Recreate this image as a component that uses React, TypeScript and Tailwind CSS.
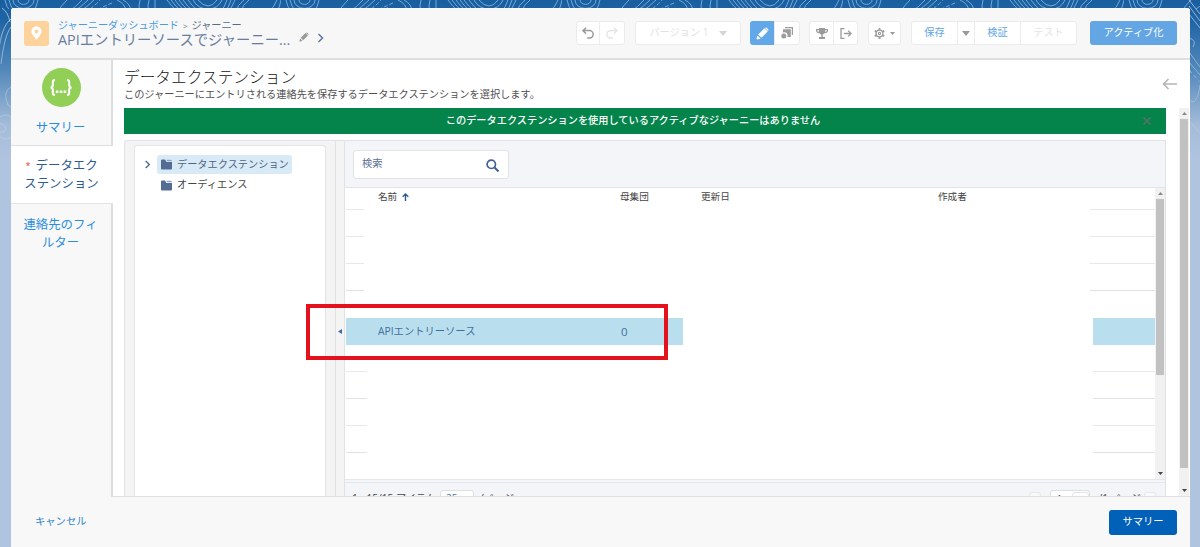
import { ReactNode } from "react";
import clsx from "clsx";

const rows = [
  { line: "#e6e8ec", short: true },
  { line: "#e6e8ec", short: true },
  { line: "#dfe1e6", short: true },
  { line: "transparent", short: true },
  { line: "transparent", name: "APIエントリーソース", count: "0" },
  { line: "#e6e9ef" },
  { line: "#e0e2e7" },
  { line: "#e6e8ec" },
  { line: "#e0e2e7" }
];

const Contours = () => (
  <svg className="absolute inset-0" width="1200" height="547" fill="none">
    <defs>
      <pattern id="topo" width="281" height="12" patternUnits="userSpaceOnUse">
        <g stroke="#7fb0dc" strokeWidth="0.9" fill="none">
          <path d="M18 0a5 4 0 0 0 11 0M13 0a10 8 0 0 0 21 0M5 0q1 7 6 12M9 0q1 6 6 12M38 0q-1 6-5 12" />
          <path d="M57 12Q62 5 67 0M68 12Q76 7 82 0M73 12Q81 7 88 0M79 12Q87 7 94 0" />
          <path d="M85 12Q94 7 100 0M92 12l22-10M98 12l10-5" strokeDasharray="4 2" />
          <path d="M117 0q9 4 9 12M123 0q8 4 8 12M140 0q-2 6 0 12M149 0q-2 6 0 12M155 0v12" />
          <path d="M167 0q4 6 11 12M171 0q4 6 11 12M175 0q4 6 11 12M179 0q4 6 11 12M183 0q4 6 11 12M188 0q4 6 11 12M193 0q5 9 15 9t14-9M198 0q5 6 10 6t9-6" />
          <path d="M227 0q-2 8-8 12M231 0q-2 8-7 12M235 0l-6 12M244 0q-7 5-8 12M249 0q-7 5-8 12" />
          <path d="M277 0q-3 8-9 12M281 0q-1 6-4 12" />
        </g>
      </pattern>
      <linearGradient id="fade" x2="0" y2="1">
        <stop offset="0" stopColor="#fff" stopOpacity=".55" />
        <stop offset="1" stopColor="#fff" stopOpacity=".15" />
      </linearGradient>
    </defs>
    <rect width="1200" height="9" fill="url(#topo)" />
    <g stroke="url(#fade)" strokeWidth="1">
      <path d="M2 8q6 4 8 14M11 19C4 24 0 38-1 50M11 27C6 33 3 48 1 64M11 87Q2 92 8 105l4 3M0 117q6-4 11 0M0 137q6 4 11 0M0 123q9 4 4 9H0" />
      <path d="M4 52v40" strokeDasharray="4 3" />
      <path d="M1189 0l11 14M1189 6l11 15M1189 14l11 14M1189 38q8 2 4 9M1189 52l11 15M1189 62l11 13M1189 100q8 7 11-15M1190 122l10 11" />
      <path d="M1189 70l11 12" strokeDasharray="4 3" />
    </g>
  </svg>
);

const Group = ({ className, children }: { className?: string; children: ReactNode }) => (
  <div
    className={clsx(
      "flex h-6 items-stretch divide-x divide-[#ececec] rounded-[3px] border border-[#ebebeb] bg-white",
      className
    )}
  >
    {children}
  </div>
);

const Cell = ({ className, children }: { className?: string; children?: ReactNode }) => (
  <div className={clsx("flex items-center justify-center", className)}>{children}</div>
);

const Caret = ({ className, up }: { className?: string; up?: boolean }) => (
  <svg className={className} viewBox="0 0 10 6" fill="currentColor">
    <path d={up ? "M0 6h10L5 0z" : "M0 0h10L5 6z"} />
  </svg>
);

const Pencil = ({ className }: { className?: string }) => (
  <svg className={className} viewBox="0 0 24 24" fill="currentColor">
    <path d="M1.500 22.500q-.8-.3-.5-1.200L2.700 15.500 8.500 21.300 2.700 23zM4 14L15.500 2.500 21.500 8.500 10 20zM17 1.600q1.500-1.400 3 0L22.400 4q1.400 1.500 0 3l-.3.200-5.400-5.300z" />
  </svg>
);

const Chevron = ({ className }: { className?: string }) => (
  <svg className={className} viewBox="0 0 6 10" fill="none" stroke="currentColor" strokeWidth="1.5">
    <path d="M1 1l4 4-4 4" />
  </svg>
);

const Folder = () => (
  <svg className="h-[11px] w-[11px] shrink-0" viewBox="0 0 11 11" fill="#536c94">
    <path d="M0 1.500Q0 .5 1 .5h3L5.500 3H11v6.500q0 1-1 1H1q-1 0-1-1z" />
    <path d="M5.300.8H10q.8 0 .8.900v.6H6.300z" fill="#8fa4c2" />
  </svg>
);

const Header = () => (
  <header className="flex h-[52px] shrink-0 items-center rounded-t-[3px] border-b-2 border-[#dedfe1] bg-[#f7f7f7] pl-[13px] pr-[13px]">
    <div className="flex h-[25px] w-[25px] items-center justify-center rounded-[3px] bg-[#fdd29b]">
      <svg className="h-[14px] w-[11px]" viewBox="0 0 12 15">
        <path fill="#fff" fillRule="evenodd" d="M6 0a5.600 5.600 0 0 1 5.600 5.600C11.600 9 8 12 6 15 4 12 .4 9 .4 5.600A5.600 5.600 0 0 1 6 0zm0 3.600a2.200 2.200 0 1 0 0 4.400 2.200 2.200 0 0 0 0-4.400z" />
      </svg>
    </div>
    <div className="ml-[9px] w-[235px] whitespace-nowrap">
      <div className="mt-px text-[10.15px] leading-[13px] text-[#596b85]">
        <span className="text-[#4b9be0]">ジャーニーダッシュボード</span>
        <span className="mx-1 text-[8px]">&gt;</span>
        ジャーニー
      </div>
      <div className="text-[14.35px] leading-[16px] text-[#687e9e]">APIエントリーソースでジャーニー...</div>
    </div>
    <Pencil className="ml-[6px] mt-[7px] h-[10px] w-[10px] text-[#999]" />
    <Chevron className="ml-2 mt-[9px] h-[10px] w-[7px] text-[#5d76a0]" />

    <div className="ml-auto flex items-center text-[10.2px] text-[#61a5e4]">
      <Group>
        <Cell className="w-[23px]">
          <svg className="h-3 w-3 text-[#9b9b9b]" viewBox="0 0 12 12" fill="none" stroke="currentColor" strokeWidth="1.500">
            <path d="M4 .8L1 3.600l3 3M1 3.600h6.500a3.700 3.700 0 0 1 0 7.400H5.200" />
          </svg>
        </Cell>
        <Cell className="w-6">
          <svg className="h-3 w-3 text-[#e3e3e3]" viewBox="0 0 12 12" fill="none" stroke="currentColor" strokeWidth="1.300">
            <path d="M8 .8l3 2.800-3 3M11 3.600H4.500a3.700 3.700 0 0 0 0 7.400h2.300" />
          </svg>
        </Cell>
      </Group>
      <Group className="ml-[10px]">
        <Cell className="w-[104px] gap-[10px] text-[#e2e2e2]">
          バージョン 1
          <Caret className="h-[5px] w-2 text-[#d5d5d5]" />
        </Cell>
      </Group>
      <Group className="ml-[9px]">
        <Cell className="-my-px -ml-px w-[25px] rounded-l-[3px] bg-[#62a7e7] text-white">
          <Pencil className="h-[13px] w-[13px]" />
        </Cell>
        <Cell className="w-6">
          <svg className="h-3 w-3" viewBox="0 0 12 12" fill="#9c9c9c">
            <path d="M4 0h8v8h-1.200V1.300H4zM2 2.200h7.800V10H6.300A3.200 3.200 0 0 0 2 5.600z" />
            <circle cx="2.800" cy="9" r="2.500" />
          </svg>
        </Cell>
      </Group>
      <Group className="ml-[9px]">
        <Cell className="w-6">
          <svg className="h-[11px] w-3" viewBox="0 0 12 11">
            <path fill="#9a9a9a" d="M3 0h6v1h3v1.500Q12 5 8.500 5.200 8 6.300 6.700 6.500V9H9v2H3V9h2.300V6.500Q4 6.300 3.500 5.200 0 5 0 2.500V1h3z" />
            <path d="M1 2q0 1.800 2 2.100V2zM11 2q0 1.800-2 2.100V2z" fill="#e4e4e4" />
          </svg>
        </Cell>
        <Cell className="w-[23px]">
          <svg className="h-[11px] w-3" viewBox="0 0 12 11" fill="none" stroke="#9a9a9a" strokeWidth="1.300">
            <path d="M4.500.7H1v9.600h3.500M4 5.500h7M8.200 2.600l2.900 2.900-2.900 2.900" />
          </svg>
        </Cell>
      </Group>
      <Group className="ml-[10px]">
        <Cell className="w-[31px] gap-[5px] text-[#9a9a9a]">
          <svg className="h-[11px] w-[11px]" viewBox="0 0 12 12" fill="none" stroke="currentColor">
            <circle cx="6" cy="6" r="3.700" strokeWidth="1.500" />
            <circle cx="6" cy="6" r="1.200" strokeWidth="1.200" />
            <path strokeWidth="2" d="M6 0v2M6 10v2M.8 3l1.700 1M9.500 8l1.700 1M.8 9l1.700-1M9.500 4l1.700-1" />
          </svg>
          <Caret className="h-[3px] w-[5px]" />
        </Cell>
      </Group>
      <Group className="ml-[10px]">
        <Cell className="w-[46px]">保存</Cell>
        <Cell className="w-[17px]">
          <Caret className="h-[5px] w-2 text-[#999]" />
        </Cell>
        <Cell className="w-[46px]">検証</Cell>
        <Cell className="w-[55px] text-[#e4e4e4]">テスト</Cell>
      </Group>
      <button className="ml-[13px] h-6 w-[87px] rounded-[3px] bg-[#64a6e4] text-[10.2px] text-white">アクティブ化</button>
    </div>
  </header>
);

const Sidebar = () => (
  <nav className="flex w-[102px] shrink-0 flex-col bg-[#f8f8f9] text-center text-[12.4px] leading-[18px] text-[#2b8de0]">
    <div className="flex h-[86px] flex-col items-center border-b border-r-2 border-[#dddee0] pt-2">
      <div className="flex h-[39px] w-[39px] items-center justify-center rounded-full bg-[#91cf56]">
        <svg className="h-[17px] w-[22px]" viewBox="0 0 22 17" fill="none" stroke="#fff" strokeWidth="2">
          <path d="M5 1Q2.800 1 2.800 3v3Q2.800 8.500.5 8.500 2.800 8.500 2.800 11v3q0 2 2.200 2M17 1q2.200 0 2.200 2v3q0 2.500 2.300 2.500-2.300 0-2.300 2.500v3q0 2-2.200 2" />
          <path d="M5.800 12.800h2.600M9.700 12.800h2.600M13.600 12.800h2.600" strokeWidth="2.500" />
        </svg>
      </div>
      <div className="mt-[12px] pr-px">サマリー</div>
    </div>
    <div className="h-[58px] border-b border-[#e3e4e6] bg-white pr-px pt-[11px] text-[#2c5c8f]">
      <span className="mr-[2px] align-[1px] text-[9px] leading-none text-[#d9462f]">*</span> データエク
      <br />
      ステンション
    </div>
    <div className="flex-1 border-r-2 border-[#dcdde0] pr-px pt-[12px]">
      連絡先のフィ
      <br />
      ルター
    </div>
  </nav>
);

const Tree = () => (
  <div className="flex w-[211px] shrink-0 rounded-tl-[3px] border-l border-t border-[#e3e4e6] bg-[#f4f4f4] pl-[9px] pt-1">
    <div className="w-[192px] rounded-t-[3px] border border-b-0 border-[#e3e4e6] bg-white pt-[9px] text-[10.2px] text-[#444]">
      <div className="flex items-center">
        <Chevron className="ml-[9px] h-[9px] w-[7px] text-[#4a6794]" />
        <div className="ml-[6px] flex h-[19px] w-[135px] items-center gap-[5px] whitespace-nowrap rounded-[3px] bg-[#d9eaf7] pl-1 text-[#4f6580]">
          <Folder />
          データエクステンション
        </div>
      </div>
      <div className="ml-[26px] mt-px flex h-5 items-center gap-[5px]">
        <Folder />
        オーディエンス
      </div>
    </div>
  </div>
);

const Scrollbar = ({ className, thumb }: { className?: string; thumb: string }) => (
  <div className={clsx("flex shrink-0 flex-col items-center bg-[#f1f1f1]", className)}>
    <Caret up className="mb-[4px] mt-[4px] h-[3px] w-[5px] shrink-0 text-[#8a8a8a]" />
    <div className={clsx("w-2 shrink-0 bg-[#c1c1c1]", thumb)} />
    <Caret className="mb-1 mt-auto h-[3px] w-[5px] shrink-0 text-[#444]" />
  </div>
);

const Table = () => (
  <div className="flex h-[292px] shrink-0 border-b border-[#e4e7ed] bg-white text-[9.6px]">
    <div className="flex-1">
      <div className="relative flex h-[22px] items-center pb-[3px] text-[#444]">
        <span className="w-[243px] pl-[33px]">
          名前
          <svg className="ml-[5px] inline-block h-2 w-[7px] align-[-0.5px]" viewBox="0 0 7 8" fill="none" stroke="#31598f" strokeWidth="1.400">
            <path d="M3.500 8V1M.7 3.700L3.500 1l2.800 2.700" />
          </svg>
        </span>
        <span className="ml-8 w-[81px]">母集団</span>
        <span className="w-[237px]">更新日</span>
        <span>作成者</span>
        <i className="absolute bottom-0 left-px h-px w-[18px] bg-[#e6e8ec]" />
        <i className="absolute bottom-0 right-0 h-px w-[65px] bg-[#e6e8ec]" />
      </div>
      {rows.map((row, key) =>
        row.name ? (
          <div key={key} className="flex h-[27px] justify-between pl-px text-[10.3px] leading-[27px] text-[#41709c]">
            <div className="flex w-[337px] bg-[#b9dfef] pl-8">
              <span className="w-[243px]">{row.name}</span>
              <span className="text-[11.500px]">{row.count}</span>
            </div>
            <div className="w-[62px] bg-[#b9dfef]" />
          </div>
        ) : (
          <div key={key} className="flex h-[27px] items-end justify-between pl-px">
            <i className={clsx("h-px", row.short ? "w-[18px]" : "w-[21px]")} style={{ background: row.line }} />
            <i className={clsx("h-px", row.short ? "w-[65px]" : "w-[62px]")} style={{ background: row.line }} />
          </div>
        )
      )}
    </div>
    <Scrollbar className="w-[10px]" thumb="h-[176px]" />
  </div>
);

const List = () => (
  <div className="flex min-w-0 flex-1 flex-col border-x border-t border-[#dfe2e6] bg-[#f3f5f9]">
    <div className="h-[47px] shrink-0 border-b border-[#e2e4e8] pl-2 pt-[9px]">
      <div className="flex h-[29px] w-[156px] justify-between rounded-[3px] border border-[#e0e3e8] bg-white pl-2 pr-[9px]">
        <span className="pt-[5px] text-[10.2px] leading-[14px] text-[#5c7195]">検索</span>
        <svg className="mt-2 h-[13px] w-[13px]" viewBox="0 0 13 13" fill="none" stroke="#3f6090" strokeWidth="1.700">
          <circle cx="5.300" cy="5.300" r="4.200" />
          <path d="M8.300 8.300l4.200 4.200" strokeWidth="2" />
        </svg>
      </div>
    </div>
    <Table />
    <div className="mt-[2px] flex h-[30px] shrink-0 items-start border-t border-[#e4e7ed] pl-[7px] pt-[7px] text-[10.2px] leading-[17px] text-[#444]">
      <span className="w-[88px]">1 - 15/15 アイテム</span>
      <span className="h-5 w-[34px] rounded-[3px] border border-[#dcdfe4] bg-white pl-[5px] leading-[15px] text-[#5c7195]">25</span>
      <span className="ml-[6px]">/ページ</span>
      <div className="ml-auto flex pr-[9px]">
        <span className="mt-[2px] h-4 w-3 rounded-[3px] border border-[#e6e8ec] bg-[#f8f9fb]" />
        <span className="ml-[9px] flex h-5 w-10 justify-between rounded-[3px] border border-[#dcdfe4] bg-white pl-[5px]">
          1
          <i className="mt-px h-5 w-[17px] rounded-[3px] border border-[#e1e3e6]" />
        </span>
        <span className="ml-2">/1 ページ</span>
        <span className="ml-[3px] mt-[2px] h-4 w-3 rounded-[3px] border border-[#e6e8ec] bg-[#f8f9fb]" />
      </div>
    </div>
  </div>
);

const App = () => {
  return (
    <div className="relative h-[547px] w-[1200px] overflow-hidden bg-[linear-gradient(#195e9f_0px,#1f64a4_20px,#5388bb_70px,#a4bcd9_125px,#b0c4df_160px)] pl-[11px] pr-[10px] pt-2 font-['Open_Sans','Noto_Sans_CJK_JP',sans-serif]">
      <Contours />
      <div className="relative flex h-[539px] flex-col rounded-t-[3px] bg-[#f8f8f8]">
        <Header />
        <div className="flex h-[437px] shrink-0">
          <Sidebar />
          <main className="flex min-w-0 flex-1 flex-col border-b border-[#dfe0e2] bg-white pl-[11px]">
            <div className="flex h-12 shrink-0 items-start justify-between pr-[13px]">
              <div className="whitespace-nowrap pt-[7px]">
                <h1 className="text-[15.7px] font-light leading-5 text-[#111]">データエクステンション</h1>
                <p className="text-[10.2px] leading-[14px] text-[#505050]">
                  このジャーニーにエントリされる連絡先を保存するデータエクステンションを選択します。
                </p>
              </div>
              <svg className="mt-[18px] h-3 w-[15px]" viewBox="0 0 15 12" fill="none" stroke="#b5b5b5" strokeWidth="1.600">
                <path d="M15 6H1.500M6.500 1L1.500 6l5 5" />
              </svg>
            </div>
            <div className="flex min-h-0 flex-1 justify-between">
              <div className="flex w-[1042px] flex-col overflow-hidden">
                <div className="flex h-[26px] shrink-0 items-center bg-[#04844b] pr-[15px] text-[10.2px] font-medium text-white">
                  <span className="flex-1 pr-[1px] text-center">
                    このデータエクステンションを使用しているアクティブなジャーニーはありません
                  </span>
                  <svg className="h-2 w-2" viewBox="0 0 8 8" stroke="#5d7168" strokeWidth="1.400">
                    <path d="M.5.500l7 7M7.500.500l-7 7" />
                  </svg>
                </div>
                <div className="mt-[6px] flex min-h-0 flex-1">
                  <Tree />
                  <div className="flex w-[9px] shrink-0 items-center border-l border-t border-[#e0e1e3] bg-[#f4f4f4] pt-[25px]">
                    <svg className="ml-[2px] h-[5px] w-1" viewBox="0 0 4 5" fill="#3d6ba6">
                      <path d="M4 0v5L0 2.500z" />
                    </svg>
                  </div>
                  <List />
                </div>
              </div>
              <Scrollbar className="mr-px w-[10px]" thumb="h-[349px]" />
            </div>
          </main>
        </div>
        <footer className="flex flex-1 items-center justify-between pl-6 pr-[13px] text-[10.3px]">
          <a className="text-[#2f86c8]">キャンセル</a>
          <button className="h-[25px] w-[68px] rounded-[3px] bg-[#0160b8] text-white">サマリー</button>
        </footer>
      </div>
      {/* callout around the selected row */}
      <div className="pointer-events-none absolute left-[306px] top-[304px] h-[56px] w-[362px] border-4 border-[#e3121c]" />
    </div>
  );
};

export default App;
